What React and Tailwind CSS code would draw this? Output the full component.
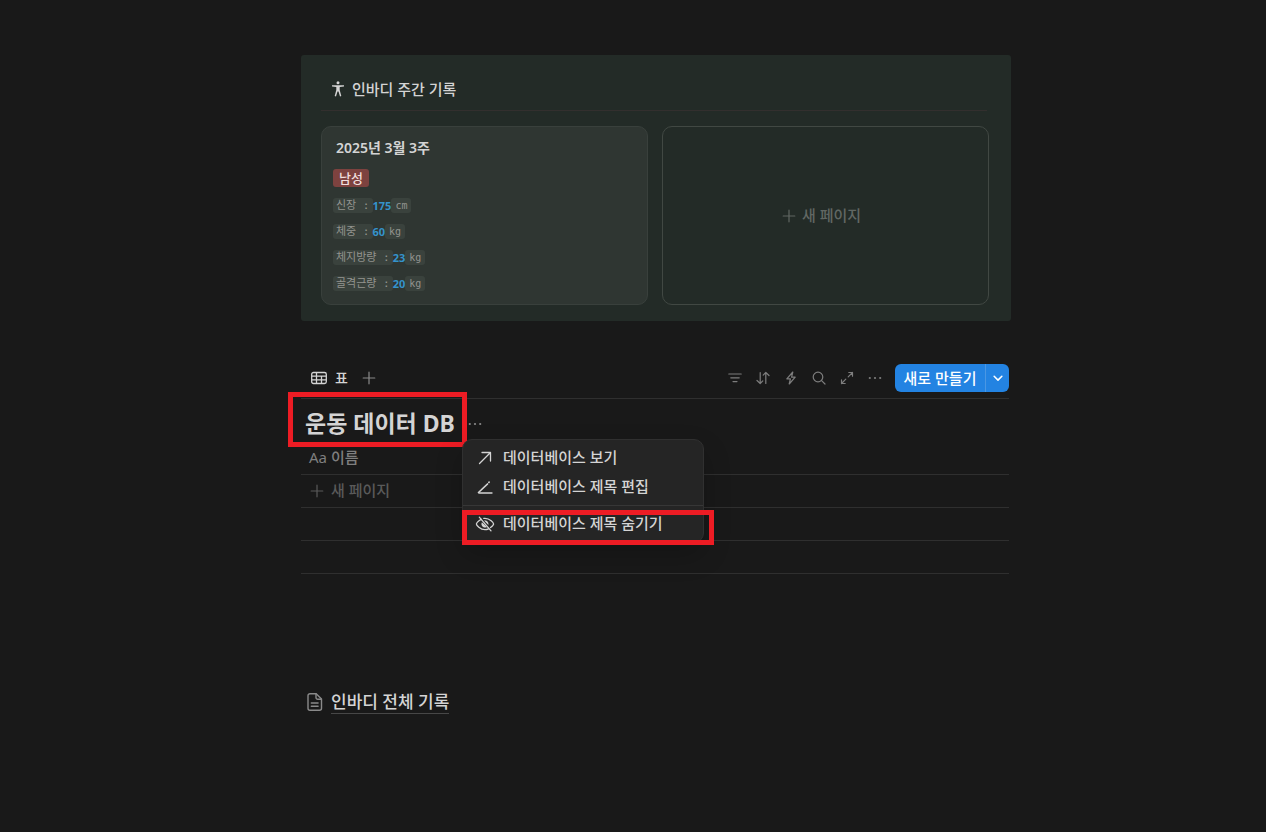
const stats = [
  { label: "신장 :", value: 175, unit: "cm" },
  { label: "체중 :", value: 60, unit: "kg" },
  { label: "체지방량 :", value: 23, unit: "kg" },
  { label: "골격근량 :", value: 20, unit: "kg" },
];

function Icon({ size = 14, width = 1.2, children }) {
  return (
    <svg
      width={size}
      height={size}
      viewBox="0 0 14 14"
      fill="none"
      stroke="currentColor"
      strokeWidth={width}
      strokeLinecap="round"
      strokeLinejoin="round"
      className="shrink-0"
      aria-hidden="true"
    >
      {children}
    </svg>
  );
}

function Plus() {
  return (
    <Icon>
      <path d="M7 1.2v11.6M1.2 7h11.6" />
    </Icon>
  );
}

function Dots() {
  return (
    <Icon>
      <g fill="currentColor" stroke="none">
        <circle cx="1.8" cy="7" r="1.1" />
        <circle cx="7" cy="7" r="1.1" />
        <circle cx="12.2" cy="7" r="1.1" />
      </g>
    </Icon>
  );
}

const tools = [
  { name: "필터", icon: <Icon><path d="M.8 3h12.4M2.8 6.8h8.4M5 10.6h4" /></Icon> },
  { name: "정렬", icon: <Icon><path d="M4.2 1.5v11M1 9.5l3.2 3 2.6-2.6M9.8 12.5v-11M7.2 4.1l2.6-2.6 3.2 3" /></Icon> },
  { name: "자동화", icon: <Icon><path d="M8.800 1L2.800 7.800h3.600L5.200 13l6-6.800H7.600L8.800 1z" /></Icon> },
  { name: "검색", icon: <Icon><circle cx="6" cy="6" r="4.8" /><path d="M9.6 9.6l3.4 3.4" /></Icon> },
  { name: "전체 페이지로 열기", icon: <Icon><path d="M8.2 5.8l4.300-4.300M8.800 1.500h3.700v3.700M5.800 8.200l-4.300 4.300M1.500 8.800v3.700h3.700" /></Icon> },
  { name: "더 보기", icon: <Dots /> },
];

function InbodyPanel() {
  return (
    <section className="rounded-[3px] bg-[#232b27] pt-4 pr-[22px] pb-4 pl-5">
      <div className="mr-[2px] flex h-10 items-center gap-[7px] border-b border-[#332f2e] pb-1 pl-[10px]">
        <svg width="14" height="16" viewBox="0 0 14 16" fill="currentColor" aria-hidden="true">
          <circle cx="7" cy="1.800" r="1.500" />
          <path d="M1 4.200h12v1.300L8.700 6v3l1.600 6-1.300.4L7.500 10.400h-1L5 15.400 3.700 15l1.600-6V6L1 5.500z" />
        </svg>
        <h2 className="text-[15px] leading-5 font-medium">인바디 주간 기록</h2>
      </div>

      <div className="mt-[15px] grid grid-cols-2 gap-[14px]">
        <article className="rounded-[10px] border border-[#39403c] bg-[#2f3632] px-[11px] pt-[11px] pb-2">
          <h3 className="pl-[3px] text-sm leading-5 font-semibold">2025년 3월 3주</h3>
          <div className="mt-[11px] flex">
            <span className="rounded-[3px] bg-[#7d423f] px-[6px] text-[13px] leading-[18px] font-medium text-[#f0dedd]">남성</span>
          </div>
          <ul className="mt-[5px]">
            {stats.map((s) => (
              <li key={s.label} className="flex h-[26px] items-center">
                <span className="rounded-[3px] bg-[#3a423d] px-[3px] font-['DejaVu_Sans_Mono','Noto_Sans_CJK_KR',monospace] text-[11px] leading-[15px] text-[#93948f]">
                  {s.label}
                </span>
                <span className="text-[11px] leading-[15px] font-bold text-[#3593cb]">{s.value}</span>
                <span className="rounded-[3px] bg-[#3a423d] px-1 font-['DejaVu_Sans_Mono',monospace] text-[10px] leading-[15px] text-[#93948f]">
                  {s.unit}
                </span>
              </li>
            ))}
          </ul>
        </article>

        <button className="flex items-center justify-center gap-[6px] rounded-[10px] border border-[#414843] pr-2 text-[15px] font-medium text-[#616763]">
          <Plus />
          새 페이지
        </button>
      </div>
    </section>
  );
}

function MenuItem({ icon, children }) {
  return (
    <button className="flex h-[29px] w-full items-center gap-2 pl-3 font-medium">
      <svg
        width="20"
        height="20"
        viewBox="0 0 20 20"
        fill="none"
        stroke="currentColor"
        strokeWidth="1.3"
        strokeLinecap="round"
        strokeLinejoin="round"
        aria-hidden="true"
      >
        {icon}
      </svg>
      {children}
    </button>
  );
}

const openIcon = <path d="M4.500 15.500l11-11M7 4.500h8.500V13" />;

const editIcon = (
  <>
    <path d="M3.500 15.500L12.500 7" strokeWidth="1.700" />
    <path d="M13.900 5.400l.2-.2" strokeWidth="1.700" />
    <path d="M4 16h13" />
  </>
);

const hideIcon = (
  <>
    <path d="M6.200 5.300C3.300 6.700 1.400 9.300 1.400 10c0 1 3.600 5.700 8.600 5.700 1.300 0 2.500-.3 3.500-.8M8.800 4.400c.4-.1.800-.1 1.200-.1 5 0 8.600 4.700 8.600 5.700 0 .6-1.200 2.200-3.100 3.600" />
    <path d="M6.900 8.200c-1.300 2.500.4 5.300 3.100 5.300.8 0 1.400-.2 2-.6zM9 6.600c2.800-.6 5 1.700 4.400 4.500z" fill="currentColor" stroke="none" />
    <path d="M4.300 3.200l11.700 13.600" />
  </>
);

function TitleMenu() {
  return (
    <div className="absolute top-10 left-[161px] z-10 w-[242px] rounded-[10px] border border-[#303030] bg-[#252525] text-[15px] shadow-[0_12px_28px_rgba(0,0,0,0.2)]">
      <div className="pt-[3px] pb-1">
        <MenuItem icon={openIcon}>데이터베이스 보기</MenuItem>
        <MenuItem icon={editIcon}>데이터베이스 제목 편집</MenuItem>
      </div>
      <div className="relative border-t border-[#373737] pt-[3px] pb-1">
        <MenuItem icon={hideIcon}>데이터베이스 제목 숨기기</MenuItem>
        <div className="pointer-events-none absolute top-1 -right-[11px] -left-px h-[35px] border-[5px] border-[#ed1c24]" />
      </div>
    </div>
  );
}

function WorkoutDatabase() {
  return (
    <section className="mt-[43px] mr-[2px]">
      <div className="flex h-[35px] items-start border-b border-[#2f2f2f]">
        <div className="flex h-7 items-center pl-[10px]">
          <button className="flex items-center gap-2 text-sm font-medium">
            <svg width="16" height="14" viewBox="0 0 16 14" fill="none" stroke="currentColor" strokeWidth="1.3" aria-hidden="true">
              <rect x=".7" y="1.5" width="14.6" height="11" rx="1.8" />
              <path d="M.7 5.200h14.600M.7 8.800h14.600M5.500 1.500v11M10.500 5.200v7.300" />
            </svg>
            표
          </button>
          <button className="ml-[14px] text-[#8a8a8a]" aria-label="보기 추가">
            <Plus />
          </button>
        </div>
        <div className="ml-auto flex h-7 items-center">
          <div className="mr-[6px] flex text-[#7d7d7d]">
            {tools.map((t) => (
              <button key={t.name} aria-label={t.name} className="flex h-7 w-7 items-center justify-center">
                {t.icon}
              </button>
            ))}
          </div>
          <div className="flex h-7 overflow-hidden rounded-md bg-[#2383e2] text-white">
            <button className="w-[90px] text-[15px] font-medium">새로 만들기</button>
            <button className="flex w-6 items-center justify-center border-l border-[#4b97e3]" aria-label="템플릿 선택">
              <Icon size={12} width={1.8}>
                <path d="M2.500 5l4.500 4.500L11.500 5" />
              </Icon>
            </button>
          </div>
        </div>
      </div>

      <div className="relative flex h-[42px] items-center pt-[6px]">
        <h1 className="pl-1 text-[23px] leading-8 font-bold">운동 데이터 DB</h1>
        <button className="absolute top-[18px] left-[167px] text-[#8a8a8a]" aria-label="제목 메뉴">
          <Dots />
        </button>
        <div className="pointer-events-none absolute -top-[7px] -left-[13px] h-[55px] w-[179px] border-[5px] border-[#ed1c24]" />
        <TitleMenu />
      </div>

      <table className="w-full border-collapse text-[15px] font-medium">
        <thead>
          <tr className="h-[33px] border-b border-[#2f2f2f] text-left text-[#7f7f7f]">
            <th className="pl-2 font-medium">
              <span className="mr-1 font-normal">Aa</span>
              이름
            </th>
          </tr>
        </thead>
        <tbody>
          <tr className="h-[33px] border-b border-[#2f2f2f] text-[#5a5a5a]">
            <td className="pl-[9px]">
              <button className="flex items-center gap-[7px]">
                <Plus />
                새 페이지
              </button>
            </td>
          </tr>
          <tr className="h-[33px] border-b border-[#2f2f2f]">
            <td />
          </tr>
          <tr className="h-[33px] border-b border-[#2f2f2f]">
            <td />
          </tr>
        </tbody>
      </table>
    </section>
  );
}

export default function App() {
  return (
    <div className="min-h-screen bg-[#191919] pt-[55px] pl-[46px] font-['Noto_Sans','Noto_Sans_CJK_KR',sans-serif] text-[#d4d4d4]">
      <main className="mx-auto max-w-[710px]">
        <InbodyPanel />
        <WorkoutDatabase />
        <a href="#records" className="mt-[117px] ml-1 flex w-fit items-center gap-[6px] text-[17px] leading-[22px] font-medium">
          <svg width="20" height="20" viewBox="0 0 20 20" fill="none" stroke="#8a8a8a" strokeWidth="1.4" strokeLinecap="round" strokeLinejoin="round" aria-hidden="true">
            <path d="M5 1.700h6.200l5.300 5.300v9.300a2 2 0 0 1-2 2H5a2 2 0 0 1-2-2V3.700a2 2 0 0 1 2-2z" />
            <path d="M11 2v3.500a1.700 1.700 0 0 0 1.700 1.700h3.500M6.300 11h6.800M6.300 14.200h6.800" />
          </svg>
          <span className="border-b border-[#474747]">인바디 전체 기록</span>
        </a>
      </main>
    </div>
  );
}
